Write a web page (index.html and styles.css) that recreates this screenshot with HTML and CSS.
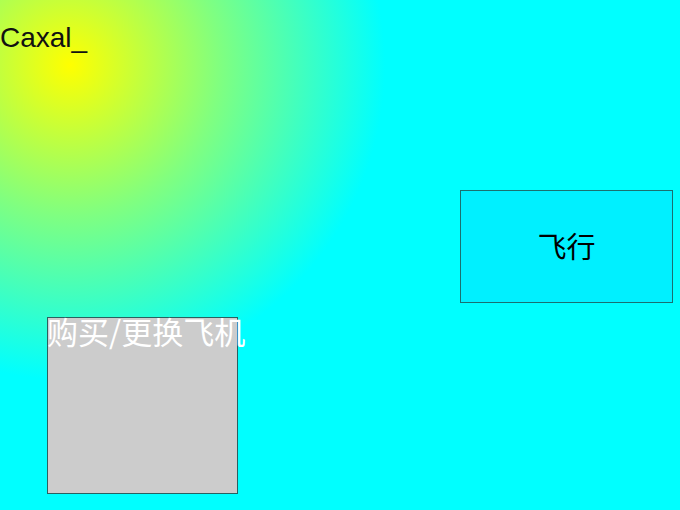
FILE: index.html
```html
<!DOCTYPE html>
<html>
<head>
<meta charset="utf-8">
<link rel="stylesheet" href="styles.css">
</head>
<body>
<div class="stage">
  <div class="title">Caxal_</div>
  <div class="fly">飞行</div>
  <div class="shop"><span class="shop-label">购买/更换飞机</span></div>
</div>
</body>
</html>
```
FILE: styles.css
```css
html, body {
  margin: 0;
  padding: 0;
}
body {
  width: 680px;
  height: 510px;
  overflow: hidden;
  background: radial-gradient(circle at 70px 65px, #ffff00 0px, #80ff80 150px, #00ffff 315px);
}
.stage {
  display: flex;
  flex-direction: column;
  align-items: flex-start;
  padding-top: 22px;
}
.title {
  font-family: "Liberation Sans", Arial, sans-serif;
  font-size: 28px;
  color: #111;
  line-height: 32px;
  height: 32px;
}
.fly {
  box-sizing: border-box;
  margin-top: 136px;
  margin-left: 460px;
  width: 213px;
  height: 113px;
  border: 1px solid #1a7070;
  background: #00f0ff;
  display: flex;
  align-items: center;
  justify-content: center;
  padding-bottom: 4px;
  font-family: "Noto Sans CJK SC", sans-serif;
  font-size: 29px;
  color: #000;
}
.shop {
  box-sizing: border-box;
  margin-top: 14px;
  margin-left: 47px;
  width: 191px;
  height: 177px;
  border: 1px solid #2a6060;
  background: #cccccc;
}
.shop-label {
  display: block;
  white-space: nowrap;
  font-family: "Noto Sans CJK SC", sans-serif;
  font-size: 31px;
  line-height: 1;
  color: #ffffff;
  margin-left: -1px;
  margin-top: -3px;
}
```
